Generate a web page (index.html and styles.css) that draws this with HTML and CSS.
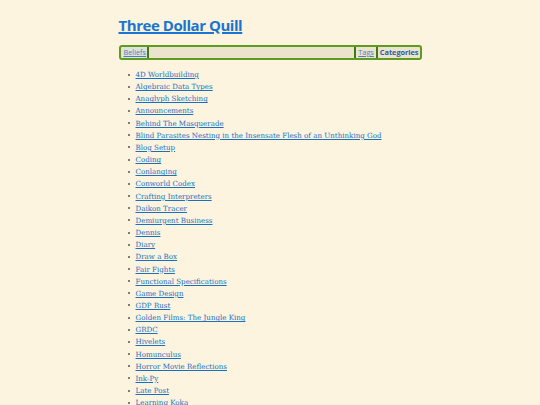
FILE: index.html
```html
<!DOCTYPE html>
<html>
<head>
<meta charset="utf-8">
<link rel="stylesheet" href="styles.css">
</head>
<body>
<div class="page">
  <h1 class="title"><a href="#">Three Dollar Quill</a></h1>
  <nav class="nav">
    <a class="nav-item first" href="#">Beliefs</a>
    <span class="nav-spacer"></span>
    <a class="nav-item mid" href="#">Tags</a>
    <a class="nav-item current" href="#">Categories</a>
  </nav>
  <ul class="cats">
    <li><a href="#">4D Worldbuilding</a></li>
    <li><a href="#">Algebraic Data Types</a></li>
    <li><a href="#">Anaglyph Sketching</a></li>
    <li><a href="#">Announcements</a></li>
    <li><a href="#">Behind The Masquerade</a></li>
    <li><a href="#">Blind Parasites Nesting in the Insensate Flesh of an Unthinking God</a></li>
    <li><a href="#">Blog Setup</a></li>
    <li><a href="#">Coding</a></li>
    <li><a href="#">Conlanging</a></li>
    <li><a href="#">Conworld Codex</a></li>
    <li><a href="#">Crafting Interpreters</a></li>
    <li><a href="#">Daikon Tracer</a></li>
    <li><a href="#">Demiurgent Business</a></li>
    <li><a href="#">Dennis</a></li>
    <li><a href="#">Diary</a></li>
    <li><a href="#">Draw a Box</a></li>
    <li><a href="#">Fair Fights</a></li>
    <li><a href="#">Functional Specifications</a></li>
    <li><a href="#">Game Design</a></li>
    <li><a href="#">GDP Rust</a></li>
    <li><a href="#">Golden Films: The Jungle King</a></li>
    <li><a href="#">GRDC</a></li>
    <li><a href="#">Hivelets</a></li>
    <li><a href="#">Homunculus</a></li>
    <li><a href="#">Horror Movie Reflections</a></li>
    <li><a href="#">Ink-Py</a></li>
    <li><a href="#">Late Post</a></li>
    <li><a href="#">Learning Koka</a></li>
  </ul>
</div>
</body>
</html>
```
FILE: styles.css
```css
html, body {
  margin: 0;
  padding: 0;
  background: #fcf4de;
}
body {
  font-family: "DejaVu Serif", serif;
}
.page {
  width: 303px;
  margin: 0 auto;
  padding-top: 15px;
}
.title {
  margin: 0;
  font-family: "Open Sans", "DejaVu Sans", sans-serif;
  font-weight: 700;
  font-size: 15px;
  line-height: 20px;
  letter-spacing: -0.45px;
}
.title a {
  color: #1b74cf;
  text-decoration-thickness: 1.5px;
  text-underline-offset: 1px;
}
.nav {
  margin-top: 10px;
  display: flex;
  align-items: stretch;
  height: 11px;
  border: 2px solid #5f9b22;
  border-radius: 3px;
  background: #ebe3cc;
  padding: 0 1px 0 2px;
  font-family: "Open Sans", "DejaVu Sans", sans-serif;
  font-size: 7.3px;
  line-height: 11px;
}
.nav-item {
  color: #4a7fc0;
  padding: 0 1px;
}
.nav-item.first {
  background: #dde3d8;
  border-right: 2px solid #3f7a10;
}
.nav-spacer {
  flex: 1;
}
.nav-item.mid {
  border-left: 2px solid #3f7a10;
  border-right: 2px solid #3f7a10;
  padding: 0 2px;
}
.nav-item.current {
  font-weight: 700;
  color: #1f5ea8;
  text-decoration: none;
  padding: 0 0 0 2px;
}
.cats {
  margin: 9px 0 0 0;
  padding: 0 0 0 17px;
  list-style: none;
  font-size: 7.1px;
  line-height: 12.15px;
  color: #333;
}
.cats li::before {
  content: "";
  display: inline-block;
  width: 2px;
  height: 2px;
  border-radius: 1px;
  background: #555;
  margin-left: -8px;
  margin-right: 6px;
  vertical-align: 1.5px;
}
.cats a {
  color: #1a6fc4;
}
```
